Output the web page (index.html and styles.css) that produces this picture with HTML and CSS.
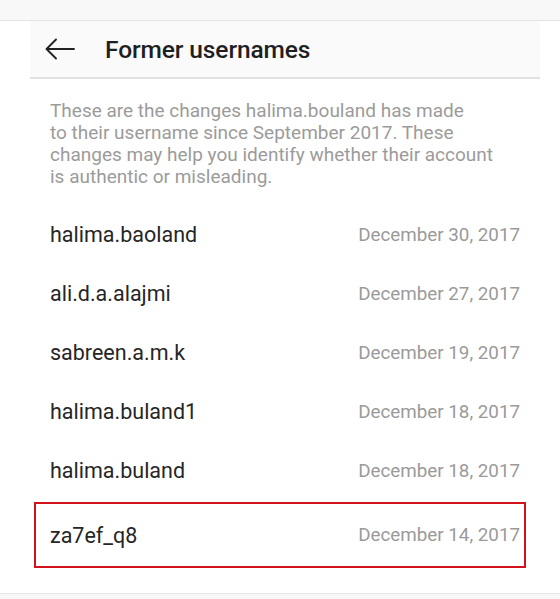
FILE: index.html
```html
<!DOCTYPE html>
<html lang="en">
<head>
<meta charset="utf-8">
<title>Former usernames</title>
<link rel="stylesheet" href="styles.css">
</head>
<body>
<div class="topband"></div>
<header class="header">
  <svg class="back" width="32" height="24" viewBox="0 0 32 24" aria-hidden="true">
    <path d="M30 12H2.5M12 2.5L2.5 12L12 21.5" fill="none" stroke="#222" stroke-width="1.9" stroke-linecap="round" stroke-linejoin="round"/>
  </svg>
  <h1 class="title">Former usernames</h1>
</header>
<p class="desc">These are the changes halima.bouland has made<br>to their username since September 2017. These<br>changes may help you identify whether their account<br>is authentic or misleading.</p>
<ul class="list">
  <li class="row"><span class="name">halima.baoland</span><span class="date">December 30, 2017</span></li>
  <li class="row"><span class="name">ali.d.a.alajmi</span><span class="date">December 27, 2017</span></li>
  <li class="row"><span class="name">sabreen.a.m.k</span><span class="date">December 19, 2017</span></li>
  <li class="row"><span class="name">halima.buland1</span><span class="date">December 18, 2017</span></li>
  <li class="row"><span class="name">halima.buland</span><span class="date">December 18, 2017</span></li>
  <li class="row row-hl"><span class="name">za7ef_q8</span><span class="date">December 14, 2017</span></li>
</ul>
<div class="bottomband"></div>
</body>
</html>
```
FILE: styles.css
```css
html, body {
  margin: 0;
  padding: 0;
  background: #ffffff;
  font-family: Roboto, "Noto Sans", "Liberation Sans", sans-serif;
}
body {
  width: 560px;
  height: 599px;
  overflow: hidden;
}
.topband {
  height: 20px;
  background: #f8f8f8;
  border-bottom: 1px solid #e4e4e4;
}
.header {
  margin: 0 20px 0 30px;
  height: 56px;
  background: #fafafa;
  border-bottom: 2px solid #e2e2e2;
  display: flex;
  align-items: center;
  padding-left: 14px;
}
.back {
  flex: none;
  display: block;
}
.title {
  margin: 0 0 0 29px;
  font-size: 24.5px;
  font-weight: 500;
  color: #1f1f1f;
  letter-spacing: -0.1px;
}
.desc {
  margin: 21px 0 0 50px;
  font-size: 19px;
  line-height: 22px;
  color: #9b9b9b;
}
.list {
  list-style: none;
  margin: 17px 34px 0 34px;
  padding: 0;
}
.row {
  height: 59px;
  display: flex;
  align-items: center;
  justify-content: space-between;
  padding: 0 6px 0 16px;
  box-sizing: border-box;
}
.name {
  font-size: 21.5px;
  color: #262626;
}
.date {
  font-size: 18.8px;
  color: #9a9a9a;
}
.row-hl {
  height: 66px;
  margin-top: 2px;
  border: 2px solid #d3121c;
  padding: 0 4px 0 14px;
}
.bottomband {
  margin-top: 25px;
  height: 10px;
  background: #f7f7f7;
  border-top: 1px solid #e6e6e6;
}
```
